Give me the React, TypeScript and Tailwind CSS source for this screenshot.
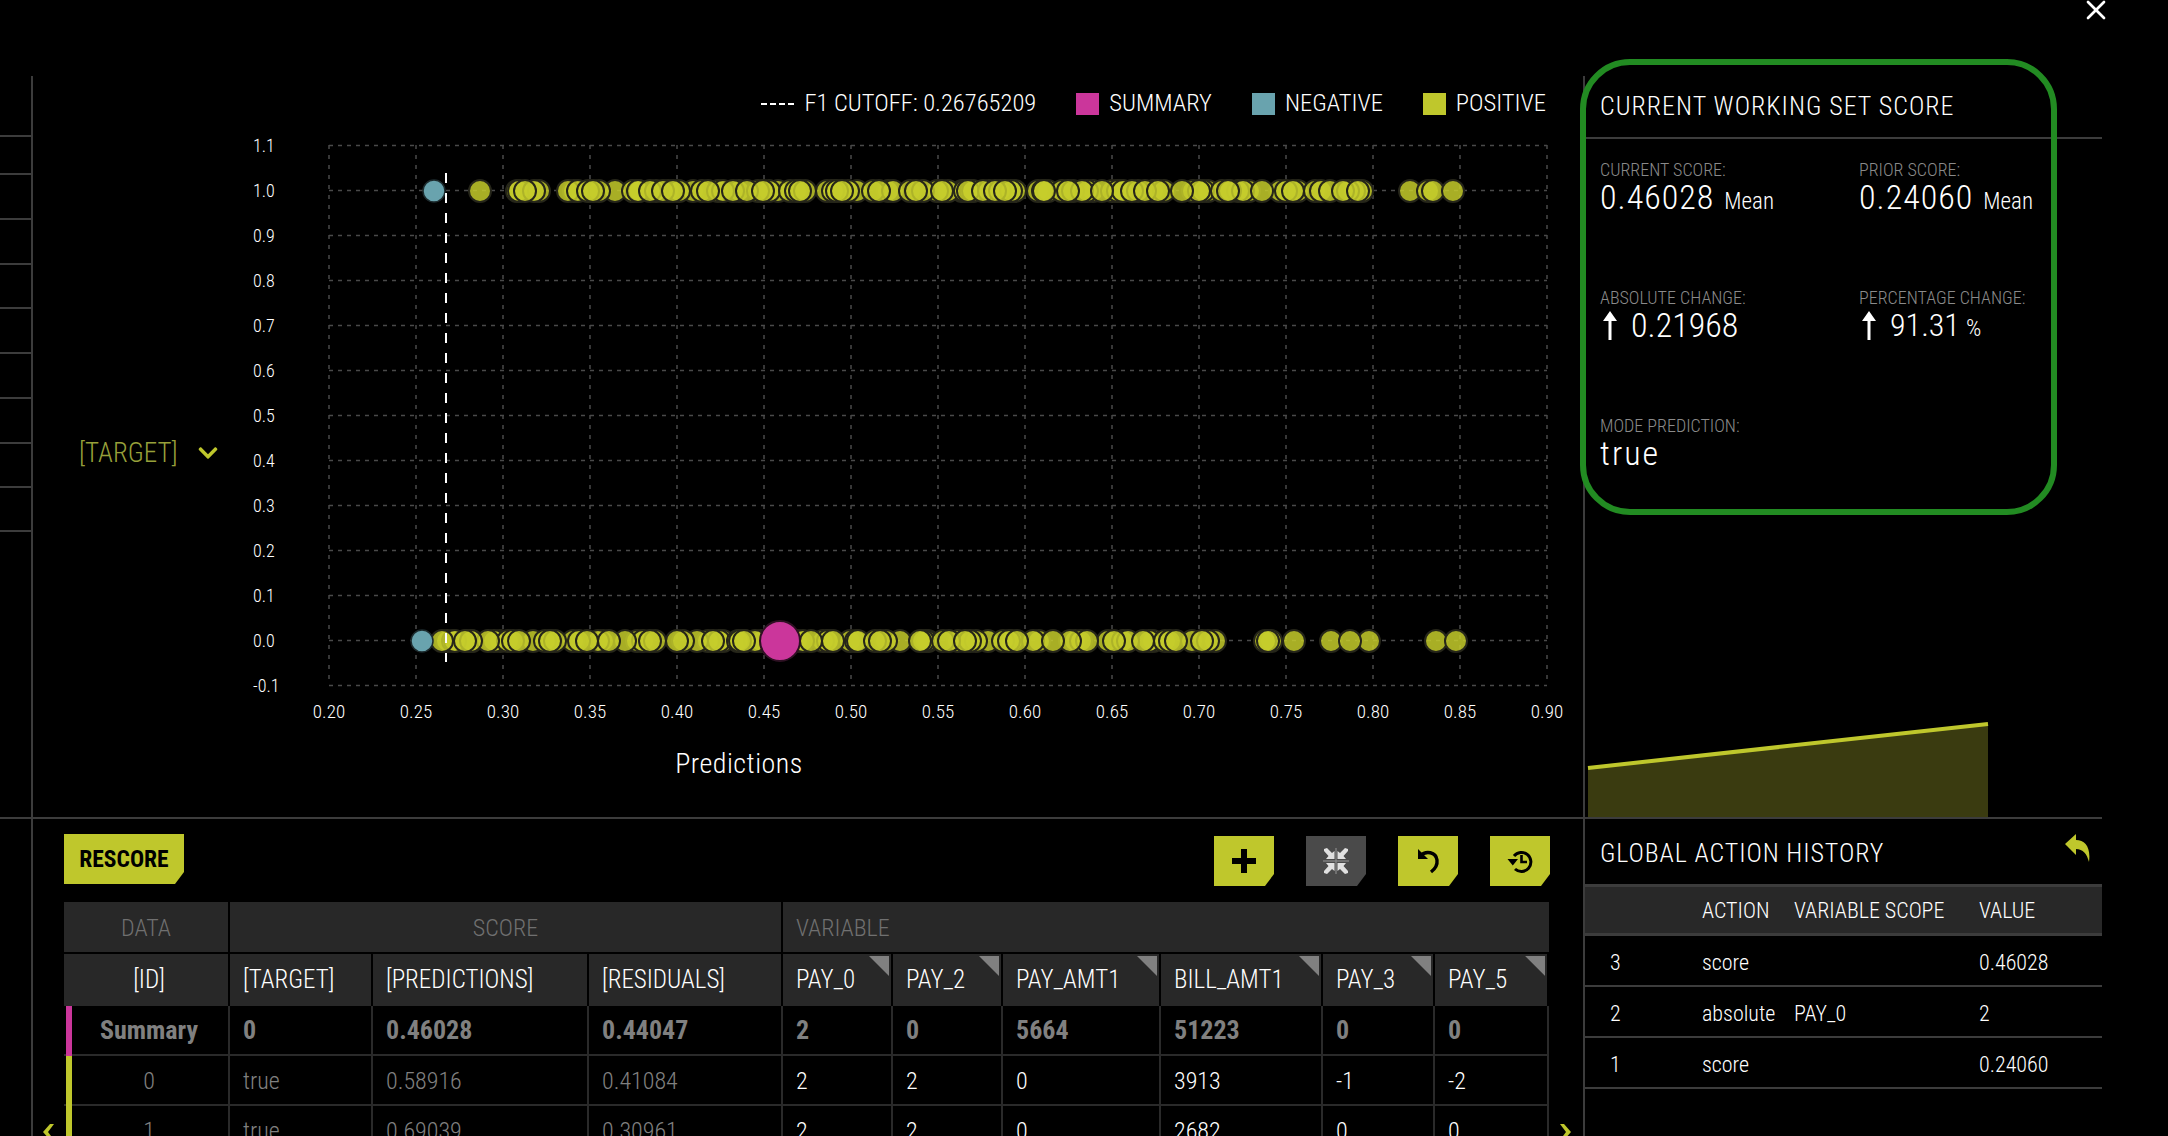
import { FaChevronDown } from "react-icons/fa";
import { X } from "lucide-react";

const topDots = [
  480, 517, 519, 539, 568, 578, 593, 615, 633, 638, 650, 663, 673, 693, 702, 723, 733, 747, 763, 778, 790, 805, 827,
  833, 842, 857, 873, 893, 910, 923, 942, 962, 965, 973, 983, 995, 1005, 1015, 1038, 1048, 1062, 1073, 1087, 1102,
  1112, 1123, 1132, 1145, 1158, 1182, 1193, 1208, 1222, 1230, 1243, 1262, 1280, 1298, 1315, 1330, 1348, 1358, 1362,
  1410, 1428, 1433, 1453,
];
const bottomDots = [
  447, 455, 465, 472, 488, 500, 513, 533, 545, 555, 573, 587, 603, 625, 637, 655, 677, 697, 713, 723, 738, 745, 755,
  775, 797, 811, 823, 833, 850, 858, 880, 900, 920, 928, 943, 958, 970, 988, 1003, 1017, 1033, 1053, 1075, 1087, 1108,
  1128, 1143, 1153, 1170, 1192, 1202, 1215, 1265, 1268, 1271, 1294, 1331, 1350, 1369, 1436, 1456,
];

// fill the busy stretch with near-duplicates, the real plot has a few hundred points
const thicken = (xs: number[], from: number, to: number) => [
  ...xs,
  ...xs.filter((x, i) => x >= from && x <= to && i % 2 === 0).map((x) => x + 6),
  ...xs.filter((x, i) => x >= from && x <= to && i % 3 === 0).map((x) => x - 5),
];

// draw order isn't sorted in the real plot, that's what gives the crescents
const shuffled = (xs: number[]) => xs.map((_, i) => xs[(i * 37) % xs.length]);

const xTicks = ["0.20", "0.25", "0.30", "0.35", "0.40", "0.45", "0.50", "0.55", "0.60", "0.65", "0.70", "0.75", "0.80", "0.85", "0.90"];
const yTicks = ["1.1", "1.0", "0.9", "0.8", "0.7", "0.6", "0.5", "0.4", "0.3", "0.2", "0.1", "0.0", "-0.1"];

function Chart() {
  return (
    <svg width="1340" height="686" viewBox="240 131 1340 686" className="block" fill="#fff">
      {yTicks.map((t, i) => (
        <g key={t}>
          <line x1="329" x2="1547" y1={145.5 + i * 45} y2={145.5 + i * 45} stroke="#4a4a4a" strokeWidth="1.5" strokeDasharray="4 5" />
          <text x="253" y={151.5 + i * 45} fontSize="18">{t}</text>
        </g>
      ))}
      {xTicks.map((t, i) => (
        <g key={t}>
          <line x1={329 + i * 87} x2={329 + i * 87} y1="145" y2="685" stroke="#4a4a4a" strokeWidth="1.5" strokeDasharray="4 6" />
          <text x={329 + i * 87} y="718" fontSize="19" textAnchor="middle">{t}</text>
        </g>
      ))}
      <text x="739" y="773" fontSize="28" letterSpacing="0.5" textAnchor="middle">Predictions</text>
      {shuffled(thicken(topDots, 510, 1360)).map((x, i) => (
        <circle key={i} cx={x} cy="191" r="11" fill="#c6cd2c" fillOpacity="0.85" stroke="#26261a" strokeWidth="2" />
      ))}
      {shuffled(thicken(bottomDots, 447, 1210)).map((x, i) => (
        <circle key={i} cx={x} cy="641" r="11" fill="#c6cd2c" fillOpacity="0.85" stroke="#26261a" strokeWidth="2" />
      ))}
      <circle cx="434" cy="191" r="11" fill="#69a3ae" stroke="#1d2b2e" strokeWidth="1.5" />
      <circle cx="422" cy="641" r="11" fill="#69a3ae" stroke="#1d2b2e" strokeWidth="1.5" />
      <circle cx="780" cy="641" r="20" fill="#cb369b" stroke="#2e1023" strokeWidth="2" />
      <line x1="446" x2="446" y1="173" y2="662" stroke="#fff" strokeWidth="2" strokeDasharray="10 10" />
    </svg>
  );
}

function LegendItem({ color, label }: { color: string; label: string }) {
  return (
    <div className="flex items-center gap-[10px]">
      <span className="w-[23px] h-[22px]" style={{ background: color }} />
      <span>{label}</span>
    </div>
  );
}

function Stat({ label, children }: { label: string; children: React.ReactNode }) {
  return (
    <div className="h-[128px]">
      <div className="h-[20px] leading-[20px] text-[18px] text-[#8a8a8a]">{label}</div>
      <div className="h-[34px] leading-[34px] text-[34px] flex items-baseline">{children}</div>
    </div>
  );
}

function UpArrow() {
  return (
    <svg width="20" height="29" viewBox="0 0 20 29" className="mr-[11px] self-center" fill="#fff">
      <path d="M10 0 L17 10 L11.5 10 L11.5 29 L8.5 29 L8.5 10 L3 10 Z" />
    </svg>
  );
}

function IconButton({ gray, children }: { gray?: boolean; children: React.ReactNode }) {
  return (
    <button
      className={`w-[60px] h-[50px] flex items-center justify-center [clip-path:polygon(0_0,100%_0,100%_calc(100%_-_12px),calc(100%_-_9px)_100%,0_100%)] ${
        gray ? "bg-[#4a4a4a] text-[#e0e0e0]" : "bg-[#bfc72c] text-black"
      }`}
    >
      {children}
    </button>
  );
}

function Corner() {
  return <span className="absolute top-[2px] right-[2px] w-[20px] h-[20px] bg-[#808080] [clip-path:polygon(0_0,100%_0,100%_100%)]" />;
}

const variableCols = ["PAY_0", "PAY_2", "PAY_AMT1", "BILL_AMT1", "PAY_3", "PAY_5"];
const rows = [
  { id: "Summary", summary: true, score: ["0", "0.46028", "0.44047"], vars: ["2", "0", "5664", "51223", "0", "0"] },
  { id: "0", summary: false, score: ["true", "0.58916", "0.41084"], vars: ["2", "2", "0", "3913", "-1", "-2"] },
  { id: "1", summary: false, score: ["true", "0.69039", "0.30961"], vars: ["2", "2", "0", "2682", "0", "0"] },
];

function DataTable() {
  return (
    <table className="table-fixed border-separate border-spacing-0 w-[1485px] text-[24px]">
      <colgroup>
        <col className="w-[166px]" />
        <col className="w-[143px]" />
        <col className="w-[216px]" />
        <col className="w-[194px]" />
        <col className="w-[110px]" />
        <col className="w-[110px]" />
        <col className="w-[158px]" />
        <col className="w-[162px]" />
        <col className="w-[112px]" />
        <col className="w-[114px]" />
      </colgroup>
      <thead className="font-light">
        <tr className="h-[52px] text-[#707070]">
          <th className="font-light pt-[2px] bg-[#282828] border-r-2 border-b-2 border-black">DATA</th>
          <th colSpan={3} className="font-light pt-[2px] bg-[#282828] border-r-2 border-b-2 border-black">SCORE</th>
          <th colSpan={6} className="font-light pt-[2px] bg-[#282828] border-b-2 border-black text-left pl-[13px]">VARIABLE</th>
        </tr>
        <tr className="h-[52px] text-white text-[25px]">
          <th className="font-light pl-[6px] bg-[#282828] border-r-2 border-black">[ID]</th>
          {["[TARGET]", "[PREDICTIONS]", "[RESIDUALS]"].map((h) => (
            <th key={h} className="font-light bg-[#282828] border-r-2 border-black text-left pl-[13px]">{h}</th>
          ))}
          {variableCols.map((h) => (
            <th key={h} className="relative font-light bg-[#282828] border-r-2 border-black text-left pl-[13px]">
              {h}
              <Corner />
            </th>
          ))}
        </tr>
      </thead>
      <tbody>
        {rows.map((r) => (
          <tr key={r.id} className={`h-[50px] ${r.summary ? "font-bold text-[26px]" : "font-light"}`}>
            <td className="relative pl-[6px] pt-[1px] text-center text-[#808080] border-r-2 border-b-2 border-[#2a2a2a]">
              <span className={`absolute left-[2px] top-0 bottom-[-2px] w-[6px] ${r.summary ? "bg-[#cb369b]" : "bg-[#bfc72c]"}`} />
              {r.id}
            </td>
            {r.score.map((v, i) => (
              <td key={i} className="pl-[13px] pt-[1px] text-[#808080] border-r-2 border-b-2 border-[#2a2a2a]">{v}</td>
            ))}
            {r.vars.map((v, i) => (
              <td key={i} className={`pl-[13px] pt-[1px] border-r-2 border-b-2 border-[#2a2a2a] ${r.summary ? "text-[#808080]" : "text-white"}`}>{v}</td>
            ))}
          </tr>
        ))}
      </tbody>
    </table>
  );
}

const history = [
  { n: "3", action: "score", scope: "", value: "0.46028" },
  { n: "2", action: "absolute", scope: "PAY_0", value: "2" },
  { n: "1", action: "score", scope: "", value: "0.24060" },
];

export default function App() {
  const rail = [61, 38, 45, 45, 44, 45, 45, 45, 44, 44];
  return (
    <div className="relative w-[2168px] h-[1136px] overflow-hidden bg-black text-white font-['Roboto'] font-light font-stretch-condensed pt-[76px]">
      <button className="absolute top-[-6px] right-[56px] text-white">
        <X size={32} strokeWidth={2} />
      </button>

      <div className="flex w-[2102px] h-[1060px]">
        {/* left rail */}
        <div className="w-[33px] flex-none flex flex-col border-r-2 border-[#3c3c3c]">
          <div className="h-[741px] border-b-2 border-[#3c3c3c] flex-none box-content">
            {rail.map((h, i) => (
              <div key={i} className="border-b-2 border-[#3c3c3c]" style={{ height: h }} />
            ))}
          </div>
        </div>

        {/* center */}
        <div className="w-[1550px] flex-none flex flex-col">
          <div className="h-[741px] flex-none box-content border-b-2 border-[#3c3c3c]">
            <div className="h-[55px] flex items-center justify-end gap-[40px] pr-[37px] text-[24.5px]">
              <div className="flex items-center gap-[10px]">
                <span className="w-[33px] border-t-2 border-dashed border-white" />
                <span>F1 CUTOFF: 0.26765209</span>
              </div>
              <LegendItem color="#cb369b" label="SUMMARY" />
              <LegendItem color="#69a3ae" label="NEGATIVE" />
              <LegendItem color="#bfc72c" label="POSITIVE" />
            </div>
            <div className="flex items-start">
              <div className="w-[207px] flex-none mt-[307px] pl-[46px] flex items-center gap-[19px] text-[27px] text-[#98a03a] leading-[30px]">
                <span>[TARGET]</span>
                <FaChevronDown size={22} className="text-[#bfc72c]" />
              </div>
              <Chart />
            </div>
          </div>

          <div className="pl-[31px] pt-[15px]">
            <div className="flex items-start justify-between w-[1486px] h-[68px]">
              <button className="w-[120px] h-[50px] pt-[2px] bg-[#bfc72c] text-black font-bold text-[23.5px] [clip-path:polygon(0_0,100%_0,100%_calc(100%_-_12px),calc(100%_-_9px)_100%,0_100%)]">
                RESCORE
              </button>
              <div className="flex gap-[32px] mt-[2px]">
                <IconButton>
                  <svg width="26" height="26" viewBox="0 0 26 26" fill="currentColor">
                    <path d="M10 1 H16 V10 H25 V16 H16 V25 H10 V16 H1 V10 H10 Z" />
                  </svg>
                </IconButton>
                <IconButton gray>
                  <svg width="26" height="26" viewBox="0 0 26 26" fill="currentColor">
                    <path d="M1 1 L4 0 L9 5 L11.5 3 V11 H3 L5.5 8 L1 3 Z" />
                    <path d="M25 1 L22 0 L17 5 L14.5 3 V11 H23 L20.5 8 L25 3 Z" />
                    <path d="M1 25 L4 26 L9 21 L11.5 23 V15 H3 L5.5 18 L1 23 Z" />
                    <path d="M25 25 L22 26 L17 21 L14.5 23 V15 H23 L20.5 18 L25 23 Z" />
                    <rect x="0" y="12.4" width="26" height="1.2" fill="#8a8a8a" />
                    <rect x="12.4" y="0" width="1.2" height="26" fill="#8a8a8a" />
                  </svg>
                </IconButton>
                <IconButton>
                  <svg width="28" height="28" viewBox="0 0 28 28" fill="none" stroke="currentColor" strokeWidth="3.4">
                    <path d="M6 9 C12 3 22 5 23 13 C23.6 18 21 22 17 25" />
                    <path d="M4 2 V12 H14 Z" fill="currentColor" stroke="none" />
                  </svg>
                </IconButton>
                <IconButton>
                  <svg width="26" height="26" viewBox="0 0 26 26" fill="none" stroke="currentColor" strokeWidth="3">
                    <path d="M7 8 A9.5 9.5 0 1 1 8 21" />
                    <path d="M0.5 11 H11 L5.8 17.5 Z" fill="currentColor" stroke="none" />
                    <path d="M14.5 7 V14 H20" strokeWidth="2.6" />
                  </svg>
                </IconButton>
              </div>
            </div>
            <DataTable />
          </div>
        </div>

        {/* right */}
        <div className="w-[519px] flex-none flex flex-col border-l-2 border-[#3c3c3c]">
          <div className="h-[741px] flex-none box-content border-b-2 border-[#3c3c3c] flex flex-col">
            <div className="h-[61px] flex-none box-content border-b-2 border-[#3c3c3c] pl-[15px] flex items-center text-[26px] tracking-[1px]">
              CURRENT WORKING SET SCORE
            </div>
            <div className="grid grid-cols-[259px_1fr] pl-[15px] pt-[21px]">
              <Stat label="CURRENT SCORE:">
                <span className="tracking-[1px]">0.46028</span>
                <span className="ml-[10px] text-[23px]">Mean</span>
              </Stat>
              <Stat label="PRIOR SCORE:">
                <span className="tracking-[1px]">0.24060</span>
                <span className="ml-[10px] text-[23px]">Mean</span>
              </Stat>
              <Stat label="ABSOLUTE CHANGE:">
                <UpArrow />
                0.21968
              </Stat>
              <Stat label="PERCENTAGE CHANGE:">
                <UpArrow />
                <span className="text-[32px]">91.31</span>
                <span className="ml-[6px] text-[24px]">%</span>
              </Stat>
              <Stat label="MODE PREDICTION:">
                <span className="tracking-[2px]">true</span>
              </Stat>
            </div>
            <svg width="517" height="95" viewBox="1585 722 517 95" className="block mt-auto">
              <polygon points="1588,768 1988,724 1988,817 1588,817" fill="#3a3b10" />
              <line x1="1588" y1="768" x2="1988" y2="724" stroke="#bfc72c" strokeWidth="4" />
            </svg>
          </div>

          <div className="h-[65px] flex-none flex items-center justify-between pl-[15px] pr-[12px] pt-[4px] text-[26px] tracking-[0.9px]">
            GLOBAL ACTION HISTORY
            <svg width="25" height="28" viewBox="0 0 25 28" className="-mt-[12px]" fill="#bfc72c">
              <path d="M0 10 L11 0 V6 C20 6 26 13 24 28 C22 20 18 15 11 15 V21 Z" />
            </svg>
          </div>
          <table className="table-fixed border-separate border-spacing-0 w-[517px] text-[22px]">
            <colgroup>
              <col className="w-[117px]" />
              <col className="w-[92px]" />
              <col className="w-[185px]" />
              <col className="w-[123px]" />
            </colgroup>
            <thead>
              <tr className="h-[52px] bg-[#282828]">
                <th className="font-light border-y-[3px] border-[#3c3c3c]" />
                <th className="font-light text-left border-y-[3px] border-[#3c3c3c]">ACTION</th>
                <th className="font-light text-left border-y-[3px] border-[#3c3c3c]">VARIABLE SCOPE</th>
                <th className="font-light text-left border-y-[3px] border-[#3c3c3c]">VALUE</th>
              </tr>
            </thead>
            <tbody>
              {history.map((h) => (
                <tr key={h.n} className="h-[51px]">
                  <td className="pl-[25px] pt-[3px] border-b-2 border-[#3c3c3c]">{h.n}</td>
                  <td className="pt-[3px] border-b-2 border-[#3c3c3c]">{h.action}</td>
                  <td className="pt-[3px] border-b-2 border-[#3c3c3c]">{h.scope}</td>
                  <td className="pt-[3px] border-b-2 border-[#3c3c3c]">{h.value}</td>
                </tr>
              ))}
            </tbody>
          </table>
        </div>
      </div>

      {/* annotation ring */}
      <div className="absolute left-[1580px] top-[59px] w-[477px] h-[456px] rounded-[50px] border-[6px] border-[#228b22] pointer-events-none" />

      {/* table scroll arrows */}
      <svg width="12" height="16" viewBox="0 0 12 16" className="absolute left-[42px] top-[1124px]" fill="#bfc72c">
        <path d="M8 0 H12 L6 8 L12 16 H8 L1 8 Z" />
      </svg>
      <svg width="12" height="16" viewBox="0 0 12 16" className="absolute left-[1560px] top-[1124px]" fill="#bfc72c">
        <path d="M4 0 H0 L6 8 L0 16 H4 L11 8 Z" />
      </svg>
    </div>
  );
}
